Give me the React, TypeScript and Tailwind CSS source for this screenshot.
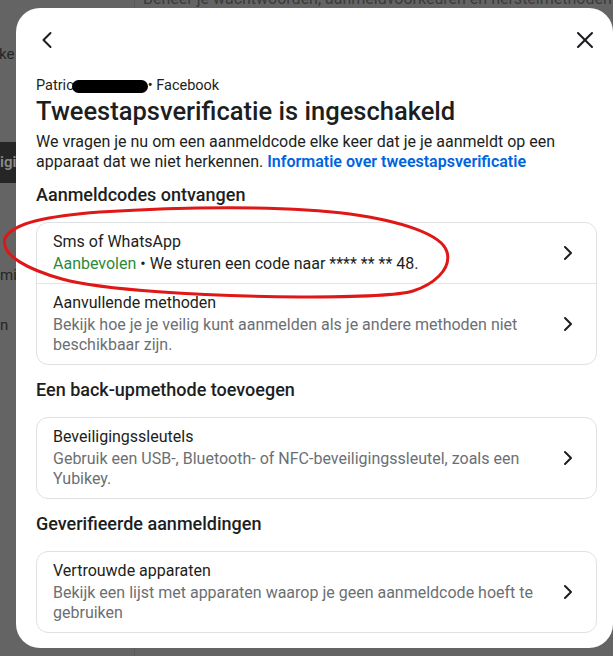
import { ChevronLeft, ChevronRight, X } from 'lucide-react';

const FONT = { fontFamily: 'Roboto, "Noto Sans", Arial, sans-serif' };

type Row = { title: string; desc?: string; recommended?: string };

const SECTIONS: { heading: string; rows: Row[] }[] = [
  {
    heading: 'Aanmeldcodes ontvangen',
    rows: [
      { title: 'Sms of WhatsApp', recommended: 'We sturen een code naar **** ** ** 48.' },
      {
        title: 'Aanvullende methoden',
        desc: 'Bekijk hoe je je veilig kunt aanmelden als je andere methoden niet beschikbaar zijn.',
      },
    ],
  },
  {
    heading: 'Een back-upmethode toevoegen',
    rows: [
      {
        title: 'Beveiligingssleutels',
        desc: 'Gebruik een USB-, Bluetooth- of NFC-beveiligingssleutel, zoals een Yubikey.',
      },
    ],
  },
  {
    heading: 'Geverifieerde aanmeldingen',
    rows: [
      {
        title: 'Vertrouwde apparaten',
        desc: 'Bekijk een lijst met apparaten waarop je geen aanmeldcode hoeft te gebruiken',
      },
    ],
  },
];

function OptionRow({ row, last }: { row: Row; last: boolean }) {
  return (
    <div className={`flex items-center pl-4 pr-4 py-[9px] ${last ? '' : 'border-b border-[#e1e3e6]'}`}>
      <div className="flex-1 pr-4">
        <div className="text-[16px] leading-5 text-[#1c1e21]">{row.title}</div>
        {row.recommended && (
          <div className="mt-0.5 text-[16px] leading-5 text-[#1c1e21]">
            <span className="text-[#2a8a3a]">Aanbevolen</span> • {row.recommended}
          </div>
        )}
        {row.desc && <div className="mt-0.5 text-[16px] leading-5 text-[#6b6f74]">{row.desc}</div>}
      </div>
      <ChevronRight className="w-6 h-6 text-[#1c1e21] shrink-0" strokeWidth={2} />
    </div>
  );
}

export default function App() {
  return (
    <div className="relative w-[613px] h-[656px] overflow-hidden bg-[#646464]" style={FONT}>
      {/* page behind the dialog */}
      <div className="flex h-full">
        <div className="w-[135px] shrink-0 border-r border-[#5a5a5a] text-[15px] text-[#262626]">
          <div className="h-[44px]" />
          <div className="h-[20px] leading-5 -ml-px">ke</div>
          <div className="h-[78px]" />
          <div className="h-[41px] bg-[#262626] flex items-center text-[#8c8c8c] font-semibold">igi</div>
          <div className="h-[82px]" />
          <div className="h-[20px] leading-5">mi</div>
          <div className="h-[30px]" />
          <div className="h-[20px] leading-5">n</div>
        </div>
        <div className="flex-1 pl-2">
          <div className="-mt-[11px] text-[16px] leading-5 text-[#3a3a3a]">
            Beheer je wachtwoorden, aanmeldvoorkeuren en herstelmethoden
          </div>
        </div>
      </div>

      {/* dialog */}
      <div className="absolute left-4 top-2 w-[597px] h-[640px] bg-white rounded-[24px] pl-5 pr-4 pt-4">
        <div className="flex items-center justify-between h-8">
          <ChevronLeft className="w-7 h-7 -ml-[3px] text-[#1c1e21]" strokeWidth={1.75} />
          <X className="w-7 h-7 -mr-[2px] text-[#1c1e21]" strokeWidth={1.75} />
        </div>

        <div className="mt-[21px] flex items-center text-[14.5px] leading-[18px] text-[#1c1e21]">
          <span>Patric</span>
          <span className="inline-block w-[76px] h-[13px] bg-black rounded-full -ml-[2px] mt-[1px]" />
          <span>• Facebook</span>
        </div>
        <h1 className="text-[25.5px] leading-7 font-medium text-[#1c1e21] mt-[2px]">
          Tweestapsverificatie is ingeschakeld
        </h1>
        <p className="mt-[7px] text-[16px] leading-5 text-[#1c1e21] pr-6">
          We vragen je nu om een aanmeldcode elke keer dat je je aanmeldt op een apparaat dat we niet herkennen.{' '}
          <span className="text-[#0064e0] font-semibold">Informatie over tweestapsverificatie</span>
        </p>

        {SECTIONS.map((s, i) => (
          <div key={s.heading} className={i === 0 ? 'mt-3' : 'mt-[14px]'}>
            <h2 className="text-[18px] leading-[22px] font-medium text-[#1c1e21]">{s.heading}</h2>
            <div className="mt-4 rounded-xl border border-[#dfe1e5]">
              {s.rows.map((r, j) => (
                <OptionRow key={r.title} row={r} last={j === s.rows.length - 1} />
              ))}
            </div>
          </div>
        ))}
      </div>

      {/* red hand-drawn annotation */}
      <svg className="absolute left-0 top-0 pointer-events-none" width="613" height="656" viewBox="0 0 613 656">
        <path
          d="M 413 291 C 432 285, 452 270, 447 252 C 442 234, 400 221, 350 214 C 280 205, 180 207, 100 212 C 50 216, 14 222, 5 238 C 0 256, 30 270, 62 279 C 102 290, 200 296, 300 297 C 352 297, 400 295, 413 291"
          fill="none"
          stroke="#e01717"
          strokeWidth="3"
          strokeLinecap="round"
        />
      </svg>
    </div>
  );
}
